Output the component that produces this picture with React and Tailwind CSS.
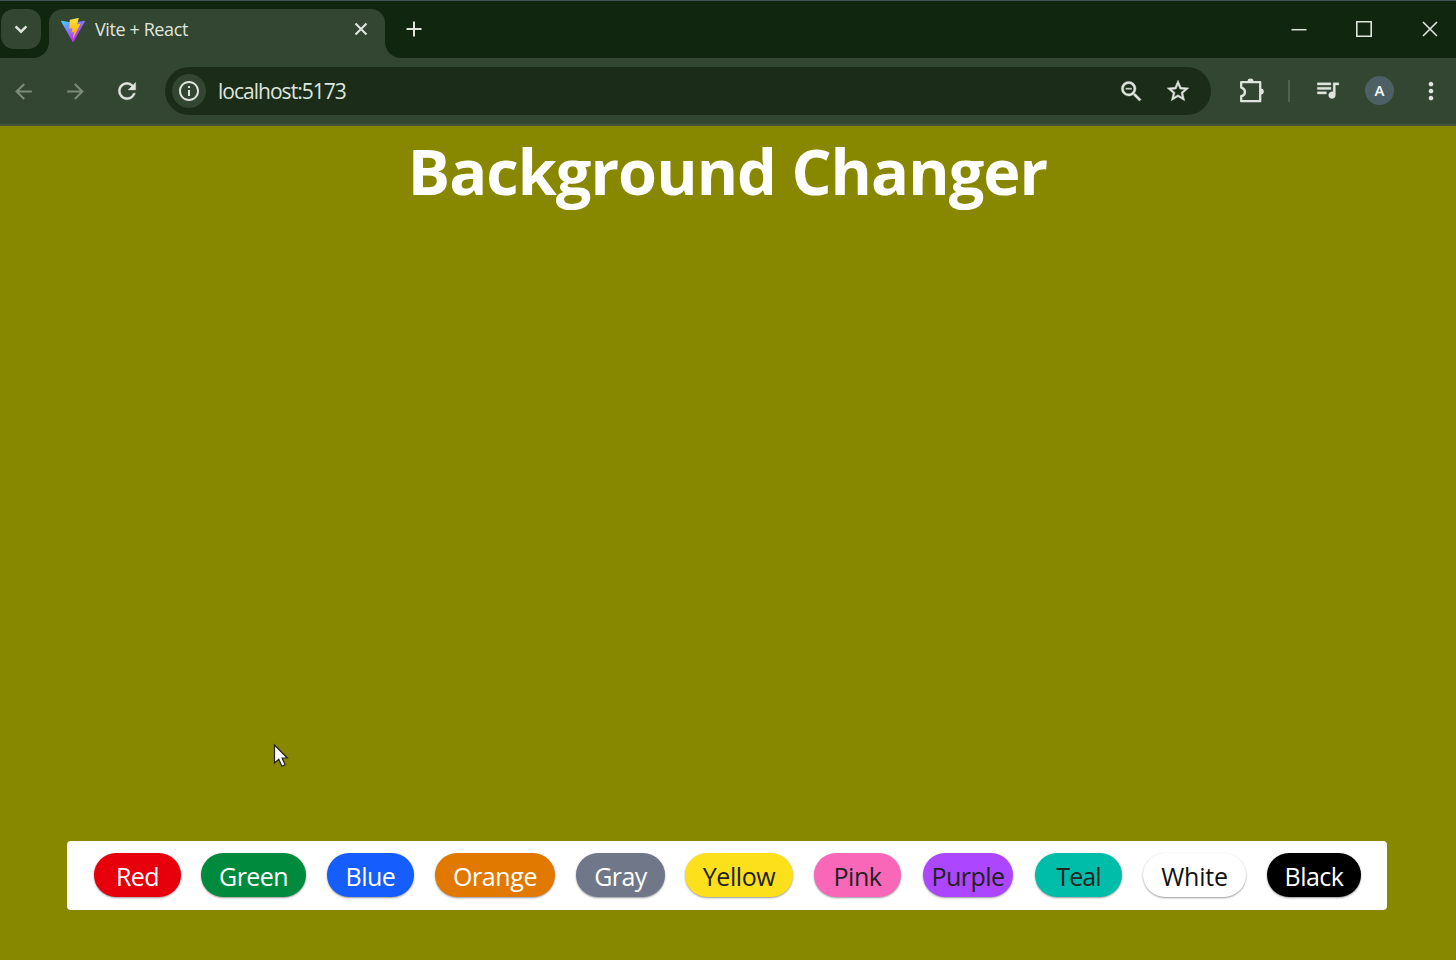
import React from "react";
import {
  MdArrowBack,
  MdArrowForward,
  MdRefresh,
  MdInfoOutline,
  MdOutlineZoomOut,
  MdStarBorder,
  MdQueueMusic,
  MdMoreVert,
} from "react-icons/md";

const colors = [
  { name: "Red", box: "w-[87px] bg-[#e7000b] text-white", text: "tracking-[-0.6px]" },
  { name: "Green", box: "w-[105px] ml-[20px] bg-[#008a3e] text-white", text: "tracking-[-0.6px]" },
  { name: "Blue", box: "w-[87px] ml-[21px] bg-[#155dfc] text-white", text: "tracking-[-0.5px]" },
  { name: "Orange", box: "w-[120px] ml-[21px] bg-[#e17900] text-white", text: "tracking-[-0.4px]" },
  { name: "Gray", box: "w-[89px] ml-[21px] bg-[#6f7788] text-white", text: "tracking-[-0.6px]" },
  { name: "Yellow", box: "w-[108px] ml-[20px] bg-[#fde01c] text-[#222]", text: "tracking-[-0.4px]" },
  { name: "Pink", box: "w-[87px] ml-[21px] bg-[#f968b8] text-[#222]", text: "tracking-[-0.5px]" },
  { name: "Purple", box: "w-[90px] ml-[22px] bg-[#ad46ff] text-[#222]", text: "tracking-[-0.5px]" },
  { name: "Teal", box: "w-[87px] ml-[22px] bg-[#00bdaa] text-[#222]", text: "tracking-[-0.9px]" },
  { name: "White", box: "w-[103px] ml-[21px] bg-white text-[#111]", text: "tracking-[-0.2px]" },
  { name: "Black", box: "w-[94px] ml-[21px] bg-black text-white", text: "tracking-[-0.5px]" },
];

function ViteLogo() {
  return (
    <svg className="size-6" viewBox="0 0 256 257" preserveAspectRatio="none">
      <defs>
        <linearGradient id="shield" x1="-.8%" x2="57.6%" y1="7.7%" y2="78.4%">
          <stop offset="0%" stopColor="#41D1FF" />
          <stop offset="100%" stopColor="#BD34FE" />
        </linearGradient>
        <linearGradient id="bolt" x1="43.4%" x2="50.3%" y1="2.2%" y2="89%">
          <stop offset="0%" stopColor="#FFEA83" />
          <stop offset="8.3%" stopColor="#FFDD35" />
          <stop offset="100%" stopColor="#FFA800" />
        </linearGradient>
      </defs>
      <path fill="url(#shield)" d="M255.153 37.938 134.897 252.976c-2.483 4.44-8.862 4.466-11.382.048L.875 37.958c-2.746-4.814 1.371-10.646 6.827-9.67l120.385 21.517a6.537 6.537 0 0 0 2.322-.004l117.867-21.483c5.438-.991 9.574 4.796 6.877 9.62Z" />
      <path fill="url(#bolt)" d="M185.432.063 96.44 17.501a3.268 3.268 0 0 0-2.634 3.014l-5.474 92.456a3.268 3.268 0 0 0 3.997 3.378l24.777-5.718c2.318-.535 4.413 1.507 3.936 3.838l-7.361 36.047c-.495 2.426 1.782 4.5 4.151 3.78l15.304-4.649c2.372-.72 4.652 1.36 4.15 3.788l-11.698 56.621c-.732 3.542 3.979 5.473 5.943 2.437l1.313-2.028 72.516-144.72c1.215-2.423-.88-5.186-3.54-4.672l-25.505 4.922c-2.396.462-4.435-1.77-3.759-4.114l16.646-57.705c.677-2.35-1.37-4.583-3.769-4.113Z" />
    </svg>
  );
}

function TabStrip() {
  return (
    <div className="flex h-[58px] border-t border-[#40545a] bg-[#11260f] text-[#dfe5de]">
      <div className="z-10 mt-2 ml-px flex size-10 items-center justify-center rounded-[13px] bg-[#334631]">
        <svg className="size-4" viewBox="0 0 16 16" fill="none" stroke="currentColor" strokeWidth="2.4">
          <path d="M2.600 5.300 8 10.700l5.400-5.400" />
        </svg>
      </div>
      <div className="relative mt-2 ml-2 flex h-[49px] w-[336px] items-center rounded-t-[14px] bg-[#334631] pb-2 pl-[12px]">
        <span className="absolute bottom-0 -left-4 size-4 bg-[#334631]">
          <span className="block size-full rounded-br-2xl bg-[#11260f]" />
        </span>
        <span className="absolute -right-4 bottom-0 size-4 bg-[#334631]">
          <span className="block size-full rounded-bl-2xl bg-[#11260f]" />
        </span>
        <ViteLogo />
        <span className="ml-[10px] text-[18px] tracking-[-0.4px] whitespace-nowrap">Vite + React</span>
        <svg className="mr-[17px] mb-px ml-auto size-[14px]" viewBox="0 0 14 14" fill="none" stroke="currentColor" strokeWidth="2.1">
          <path d="m1.500 1.500 11 11M12.500 1.500l-11 11" />
        </svg>
      </div>
      <svg className="mt-5 ml-[21px] size-4" viewBox="0 0 16 16" fill="none" stroke="currentColor" strokeWidth="2">
        <path d="M8 .5v15M.5 8h15" />
      </svg>
      <div className="mt-5 mr-[18px] ml-auto flex h-4 gap-[49px]">
        <svg className="size-4" viewBox="0 0 16 16" fill="none" stroke="currentColor" strokeWidth="1.500">
          <path d="M.5 8.700h15" />
        </svg>
        <svg className="size-4" viewBox="0 0 16 16" fill="none" stroke="currentColor" strokeWidth="1.600">
          <path d="M.8.8h14.400v14.400H.8z" />
        </svg>
        <svg className="ml-px size-4" viewBox="0 0 16 16" fill="none" stroke="currentColor" strokeWidth="1.600">
          <path d="m1 1 14 14M15 1 1 15" />
        </svg>
      </div>
    </div>
  );
}

function Toolbar() {
  return (
    <div className="flex h-[68px] items-center border-b-2 border-[#46523e] bg-[#334631] pl-[11px] text-[#dfe5de]">
      <MdArrowBack className="size-[25px] text-[#7d8b7a]" />
      <MdArrowForward className="ml-[27px] size-[25px] text-[#7d8b7a]" />
      <MdRefresh className="ml-[26px] size-[26px] [&>path:last-child]:stroke-current [&>path:last-child]:stroke-[0.3px]" />
      <div className="ml-[25px] flex h-12 w-[1046px] items-center rounded-full bg-[#1b2d19] pl-[7px]">
        <div className="flex size-[34px] items-center justify-center rounded-full bg-[#334631]">
          <MdInfoOutline className="size-6" />
        </div>
        <span className="mt-[2px] ml-3 text-[21px] tracking-[-0.98px]">localhost:5173</span>
        <MdOutlineZoomOut className="ml-auto size-[27px] [&>path:last-child]:stroke-current [&>path:last-child]:stroke-[0.4px]" />
        <MdStarBorder className="mr-5 ml-5 size-[26px] [&>path:last-child]:stroke-current [&>path:last-child]:stroke-[0.4px]" />
      </div>
      <svg className="ml-[28px] size-[26px]" viewBox="0 0 26 26">
        <path d="M2.200 4.200h19v19h-19v-5c5-1.300 5-7.300 0-8.600z" fill="none" stroke="currentColor" strokeWidth="2.300" strokeLinejoin="round" />
        <path d="M8.500 3.500a3 3 0 0 1 6 0zM21.800 10.500a3 3 0 0 1 0 6z" fill="currentColor" />
      </svg>
      <span className="ml-[23px] h-[22px] w-[2px] bg-[#52644f]" />
      <MdQueueMusic className="mb-[3px] ml-[24px] size-[27px] [&>path:last-child]:stroke-current [&>path:last-child]:stroke-[0.3px]" />
      <span className="mb-px ml-[24px] flex size-[29px] items-center justify-center rounded-full bg-[#4d6064] text-[15px] font-semibold text-white">A</span>
      <MdMoreVert className="ml-[23px] size-[28px]" />
    </div>
  );
}

export default function App() {
  return (
    <div className="relative flex h-[960px] w-[1456px] flex-col overflow-hidden bg-[#878700] font-['Open_Sans','Noto_Sans',sans-serif]">
      <TabStrip />
      <Toolbar />
      <main className="flex flex-1 flex-col items-center">
        <h1 className="mt-px mr-px text-[63px] leading-[88px] font-bold tracking-[-0.95px] whitespace-nowrap text-white">Background Changer</h1>
        <div className="mt-auto mr-[2px] mb-[50px] flex h-[69px] w-[1320px] items-center rounded-[4px] bg-white pb-px pl-[27px]">
          {colors.map((c) => (
            <button key={c.name} className={`flex h-11 shrink-0 items-center justify-center rounded-full pt-[3px] text-[25px] leading-none whitespace-nowrap shadow-[0_1px_2px_rgba(0,0,0,0.4)] ${c.box} ${c.text}`}>
              {c.name}
            </button>
          ))}
        </div>
      </main>
      <svg className="absolute top-[743px] left-[273px] h-[26px] w-[16px]" viewBox="0 0 16 26">
        <path d="M1.500 2v18l4.300-3.800 3 7 3.300-1.400-3-6.800h5.200z" fill="#fff" stroke="#222" strokeWidth="1.200" />
      </svg>
    </div>
  );
}
